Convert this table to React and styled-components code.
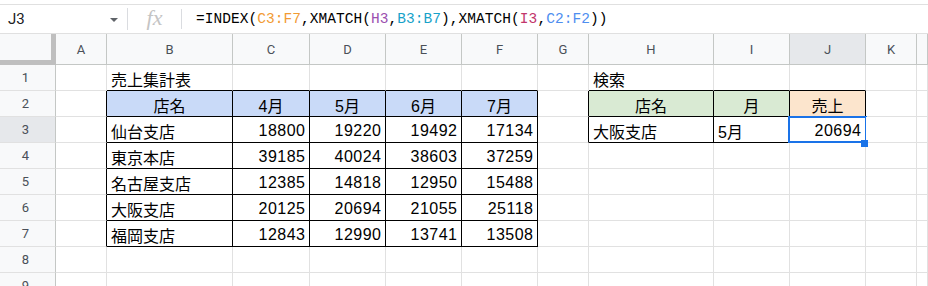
import React from 'react';
import styled, { createGlobalStyle } from 'styled-components';

const GlobalStyle = createGlobalStyle`
  html, body { margin: 0; padding: 0; background: #ffffff; }
  body { font-family: "Liberation Sans", "Noto Sans CJK JP", Arial, sans-serif; }
`;

const GRID_LINE = '#e1e1e1';
const HEAD_LINE = '#c4c7c5';
const BLACK = '#000000';

const Page = styled.div`
  width: 928px;
  height: 286px;
  overflow: hidden;
  background: #fff;
  padding-top: 4px;
  box-sizing: border-box;
`;

const FormulaBar = styled.div`
  display: flex;
  align-items: center;
  height: 30px;
  box-sizing: border-box;
  border-top: 1px solid #e0e0e0;
  border-bottom: 1px solid #e0e0e0;
`;

const NameBox = styled.div`
  width: 127px;
  box-sizing: border-box;
  display: flex;
  align-items: center;
  justify-content: space-between;
  padding: 0 9px 0 8px;
  font-family: Roboto, "Liberation Sans", Arial, sans-serif;
  font-size: 15px;
  color: #202124;
`;

const Caret = styled.span`
  width: 0;
  height: 0;
  border-left: 4.5px solid transparent;
  border-right: 4.5px solid transparent;
  border-top: 4.5px solid #5f6368;
  margin-top: 2px;
`;

const Divider = styled.div`
  width: 1px;
  height: ${(p) => p.$h || 20}px;
  background: #dadce0;
`;

const Fx = styled.div`
  width: 53px;
  text-align: center;
  font-family: "Liberation Serif", "DejaVu Serif", serif;
  font-style: italic;
  font-size: 22px;
  color: #c4c4c4;
  line-height: 1;
  margin-top: -3px;
`;

const FormulaText = styled.div`
  padding-left: 14px;
  font-family: "Liberation Mono", "DejaVu Sans Mono", monospace;
  font-size: 14.5px;
  color: #000;
  white-space: nowrap;
  letter-spacing: 0.05px;
`;

const Ref = styled.span`
  color: ${(p) => p.$c};
`;

const Grid = styled.div`
  display: grid;
  grid-template-columns: 56px 51px 126px 77px 76px 76px 76px 51px 125px 76px 76px 51px 1fr;
  grid-template-rows: 31px repeat(9, 26px);
`;

const Corner = styled.div`
  background: #f8f9fa;
  border-right: 5px solid #bfbfbf;
  border-bottom: 5px solid #bfbfbf;
`;

const ColHeader = styled.div`
  background: ${(p) => (p.$selected ? '#e6e8eb' : '#f8f9fa')};
  border-right: 1px solid ${HEAD_LINE};
  border-bottom: 1px solid ${HEAD_LINE};
  display: flex;
  align-items: center;
  justify-content: center;
  font-family: Roboto, "Liberation Sans", Arial, sans-serif;
  font-size: 13px;
  color: #4a5058;
  padding-top: 1px;
`;

const RowHeader = styled.div`
  background: ${(p) => (p.$selected ? '#e6e8eb' : '#f8f9fa')};
  border-right: 1px solid ${HEAD_LINE};
  border-bottom: 1px solid ${GRID_LINE};
  display: flex;
  align-items: center;
  justify-content: center;
  font-family: Roboto, "Liberation Sans", Arial, sans-serif;
  font-size: 13px;
  color: #4a5058;
  padding-right: 4px;
`;

const Cell = styled.div`
  position: relative;
  min-width: 0;
  background: ${(p) => p.$bg || '#fff'};
  border-right: 1px solid ${(p) => p.$br || GRID_LINE};
  border-bottom: 1px solid ${(p) => p.$bb || GRID_LINE};
  display: flex;
  align-items: center;
  justify-content: ${(p) =>
    p.$align === 'right' ? 'flex-end' : p.$align === 'center' ? 'center' : 'flex-start'};
  padding: 2px ${(p) => (p.$num ? 3.5 : 4)}px 0 4px;
  font-family: "Liberation Sans", "Noto Sans CJK JP", Arial, sans-serif;
  font-size: 16px;
  letter-spacing: ${(p) => (p.$num ? '0.5px' : '0')};
  color: #000;
  white-space: nowrap;
  overflow: visible;
`;

const Selection = styled.div`
  position: absolute;
  left: -2px;
  right: -2px;
  top: -1px;
  bottom: -1px;
  border: 2px solid #1a73e8;
  pointer-events: none;
`;

const FillHandle = styled.div`
  position: absolute;
  right: -3px;
  bottom: -5px;
  width: 7px;
  height: 7px;
  background: #1a73e8;
  z-index: 2;
`;

const COLS = ['A', 'B', 'C', 'D', 'E', 'F', 'G', 'H', 'I', 'J', 'K', ''];

const BLUE = '#c9daf8';
const GREEN = '#d9ead3';
const ORANGE = '#fce5cd';

const cells = {
  'B1': { v: '売上集計表' },
  'H1': { v: '検索' },
  'B2': { v: '店名', a: 'center', bg: BLUE },
  'C2': { v: '4月', a: 'center', bg: BLUE },
  'D2': { v: '5月', a: 'center', bg: BLUE },
  'E2': { v: '6月', a: 'center', bg: BLUE },
  'F2': { v: '7月', a: 'center', bg: BLUE },
  'H2': { v: '店名', a: 'center', bg: GREEN },
  'I2': { v: '月', a: 'center', bg: GREEN },
  'J2': { v: '売上', a: 'center', bg: ORANGE },
  'H3': { v: '大阪支店' },
  'I3': { v: '5月' },
  'J3': { v: '20694', a: 'right', num: true, sel: true },
};

const tableRows = [
  ['仙台支店', 18800, 19220, 19492, 17134],
  ['東京本店', 39185, 40024, 38603, 37259],
  ['名古屋支店', 12385, 14818, 12950, 15488],
  ['大阪支店', 20125, 20694, 21055, 25118],
  ['福岡支店', 12843, 12990, 13741, 13508],
];
tableRows.forEach((row, i) => {
  const r = i + 3;
  cells[`B${r}`] = { v: row[0] };
  ['C', 'D', 'E', 'F'].forEach((c, j) => {
    cells[`${c}${r}`] = { v: String(row[j + 1]), a: 'right', num: true };
  });
});

const boxes = [
  { r1: 2, r2: 7, c1: 2, c2: 6 },
  { r1: 2, r2: 3, c1: 8, c2: 10 },
];

const inside = (b, r, c) => r >= b.r1 && r <= b.r2 && c >= b.c1 && c <= b.c2;

function borderFor(r, c) {
  let right = false;
  let bottom = false;
  boxes.forEach((b) => {
    if (inside(b, r, c) || inside(b, r, c + 1)) right = true;
    if (inside(b, r, c) || inside(b, r + 1, c)) bottom = true;
  });
  return { br: right ? BLACK : undefined, bb: bottom ? BLACK : undefined };
}

const ROWS = [1, 2, 3, 4, 5, 6, 7, 8, 9];

export default function App() {
  return (
    <>
      <GlobalStyle />
      <Page>
        <FormulaBar>
          <NameBox>
            <span>J3</span>
            <Caret />
          </NameBox>
          <Divider $h={22} />
          <Fx>fx</Fx>
          <Divider $h={20} />
          <FormulaText>
            =INDEX(<Ref $c="#f29b33">C3:F7</Ref>,XMATCH(<Ref $c="#9b4fb0">H3</Ref>,
            <Ref $c="#17a2c9">B3:B7</Ref>),XMATCH(<Ref $c="#c2356b">I3</Ref>,
            <Ref $c="#4e8ef0">C2:F2</Ref>))
          </FormulaText>
        </FormulaBar>
        <Grid>
          <Corner />
          {COLS.map((c, i) => (
            <ColHeader key={`h${i}`} $selected={c === 'J'}>
              {c}
            </ColHeader>
          ))}
          {ROWS.map((r) => (
            <React.Fragment key={r}>
              <RowHeader $selected={r === 3}>{r}</RowHeader>
              {COLS.map((c, ci) => {
                const spec = cells[`${c}${r}`] || {};
                const b = borderFor(r, ci + 1);
                return (
                  <Cell
                    key={`${c}${r}-${ci}`}
                    $align={spec.a}
                    $bg={spec.bg}
                    $br={b.br}
                    $bb={b.bb}
                    $num={spec.num}
                  >
                    {spec.v}
                    {spec.sel && (
                      <>
                        <Selection />
                        <FillHandle />
                      </>
                    )}
                  </Cell>
                );
              })}
            </React.Fragment>
          ))}
        </Grid>
      </Page>
    </>
  );
}
